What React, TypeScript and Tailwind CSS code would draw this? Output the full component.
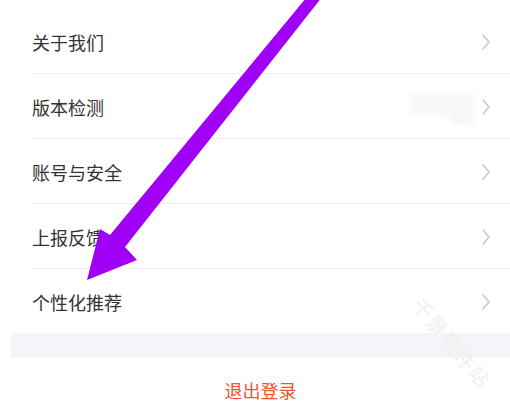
const items = ['关于我们', '版本检测', '账号与安全', '上报反馈', '个性化推荐']

function Chevron() {
  return (
    <svg width="10" height="18" viewBox="0 0 10 18" className="shrink-0">
      <path d="M2 2 L8 9 L2 16" fill="none" stroke="#c6c6c6" strokeWidth="1.4" strokeLinecap="round" strokeLinejoin="round" />
    </svg>
  )
}

export default function App() {
  return (
    <div className="relative w-[510px] h-[405px] overflow-hidden bg-white font-['Noto_Sans_CJK_SC',sans-serif]">
      <div className="ml-[11px] w-[499px]">
        <div className="h-[8px]" />
        {items.map((label, i) => (
          <div key={label} className="pl-[21px]">
            <div
              className={`flex items-center h-[65px] pt-[2px] pr-[19px] ${i > 0 ? 'border-t border-[#f0f0f0]' : ''}`}
            >
              <span className="flex-1 text-[18px] leading-[22px] text-[#333333]">{label}</span>
              {label === '版本检测' && (
                // blurred-out version number
                <div className="mr-[7px] flex flex-col items-end gap-[1px] blur-[3px]">
                  <div className="w-[64px] h-[24px] bg-[#f8f8f8]" />
                  <div className="w-[24px] h-[6px] bg-[#f3f3f3]" />
                </div>
              )}
              <Chevron />
            </div>
          </div>
        ))}
        <div className="h-[25px] bg-[#f4f5f8]" />
        <div className="pt-[21px] text-center text-[18px] leading-[22px] text-[#f2532f]">退出登录</div>
      </div>

      {/* watermark */}
      <div className="absolute left-[397px] top-[332px] w-[110px] text-center text-[20px] leading-[22px] tracking-[2px] text-[#efefef] rotate-[50deg] pointer-events-none">
        千景软件站
      </div>

      {/* annotation arrow */}
      <svg className="absolute left-0 top-0 pointer-events-none" width="510" height="405" viewBox="0 0 510 405">
        <polygon
          points="87,280 137,260 125,247 326,-8 316,-14 110,235 100,229"
          fill="#a100f7"
        />
      </svg>
    </div>
  )
}
